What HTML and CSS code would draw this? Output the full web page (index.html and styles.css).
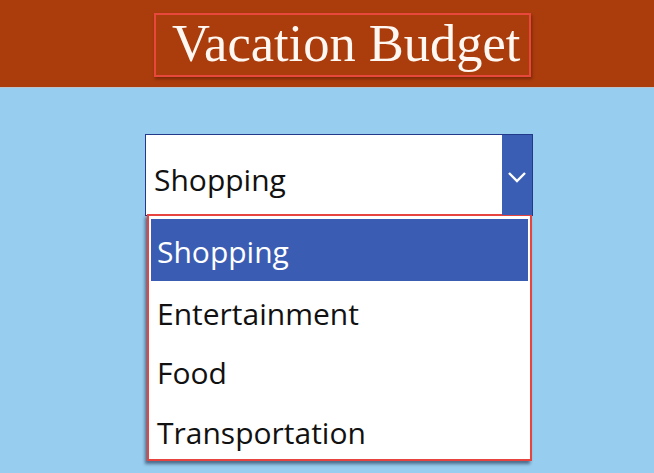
FILE: index.html
```html
<!DOCTYPE html>
<html lang="en">
<head>
<meta charset="utf-8">
<title>Vacation Budget</title>
<link rel="stylesheet" href="styles.css">
</head>
<body>
<header class="header">
  <div class="title-box"><h1 class="title">Vacation Budget</h1></div>
</header>
<main class="main">
  <div class="dropdown">
    <div class="select">
      <span class="select-value">Shopping</span>
      <span class="select-btn">
        <svg width="20" height="12" viewBox="0 0 20 12" aria-hidden="true">
          <path d="M2 2 L10 10 L18 2" fill="none" stroke="#ffffff" stroke-width="2.4"/>
        </svg>
      </span>
    </div>
    <ul class="list">
      <li class="item item-selected">Shopping</li>
      <li class="item">Entertainment</li>
      <li class="item">Food</li>
      <li class="item">Transportation</li>
    </ul>
  </div>
</main>
</body>
</html>
```

FILE: styles.css
```css
html, body {
  margin: 0;
  padding: 0;
}
body {
  width: 654px;
  height: 473px;
  background: #97cdee;
  overflow: hidden;
  font-family: "Open Sans", "Noto Sans", sans-serif;
}
.header {
  height: 88px;
  box-sizing: border-box;
  background: #ab3d0c;
  border-bottom: 1px solid #b9c3c9;
  padding-top: 13px;
  padding-left: 154px;
}
.title-box {
  width: 377px;
  height: 64px;
  box-sizing: border-box;
  border: 2px solid #e8483c;
  box-shadow: 1px 2px 3px rgba(60, 10, 0, 0.45);
  padding-left: 16px;
  padding-bottom: 3px;
}
.title {
  margin: 0;
  font-family: "Liberation Serif", "Times New Roman", serif;
  font-weight: normal;
  font-size: 52.5px;
  line-height: 57px;
  color: #fff8f2;
  white-space: nowrap;
}
.main {
  padding-top: 46px;
  padding-left: 145px;
}
.dropdown {
  width: 388px;
}
.select {
  display: flex;
  height: 82px;
  box-sizing: border-box;
  border: 1px solid #23398a;
  background: #ffffff;
}
.select-value {
  flex: 1;
  padding-left: 8px;
  padding-top: 8px;
  font-size: 30px;
  line-height: 73px;
  color: #111111;
}
.select-btn {
  width: 30px;
  background: #3b5eb5;
  display: flex;
  align-items: center;
  justify-content: center;
  padding-top: 3px;
}
.list {
  list-style: none;
  margin: -2px 0 0 2px;
  padding: 3px 2px 0 2px;
  width: 385px;
  box-sizing: border-box;
  background: #ffffff;
  border: 2px solid #e8443f;
  box-shadow: -2px 3px 3px rgba(20, 30, 60, 0.55);
}
.item {
  height: 56.5px;
  padding-top: 3px;
  padding-left: 6px;
  font-size: 30px;
  line-height: 59.5px;
  color: #111111;
  white-space: nowrap;
}
.item-selected {
  height: 58.5px;
  background: #3a5db3;
  color: #ffffff;
}
```
